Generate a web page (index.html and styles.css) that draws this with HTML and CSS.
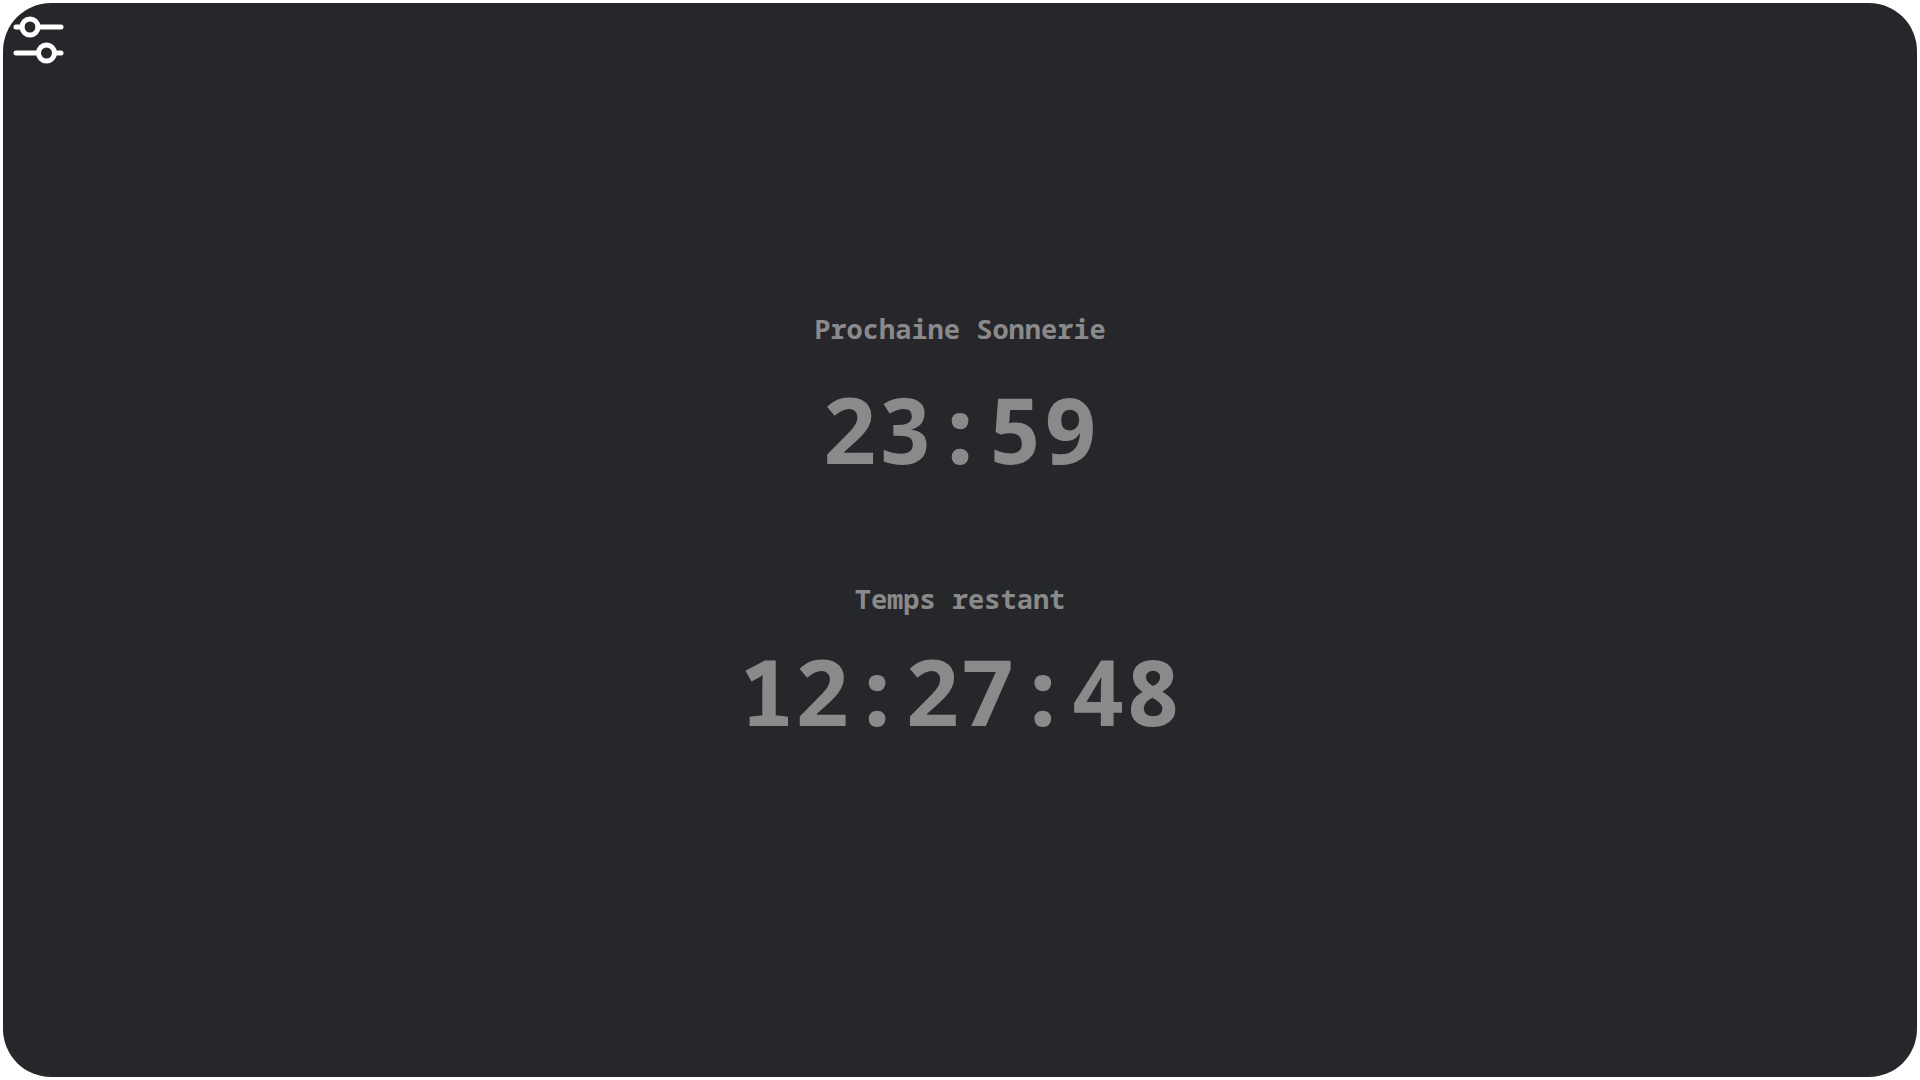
FILE: index.html
```html
<!DOCTYPE html>
<html lang="fr">
<head>
<meta charset="utf-8">
<title>Prochaine Sonnerie</title>
<link rel="stylesheet" href="styles.css">
</head>
<body>
<div class="app">
  <button class="settings" type="button" aria-label="Réglages">
    <svg class="settings-icon" viewBox="0 0 52 52" aria-hidden="true">
      <path d="M4 13H10M26 13H49M4 39H26M43 39H49"/>
      <circle cx="18" cy="13" r="8"/>
      <circle cx="34.5" cy="39" r="8"/>
    </svg>
  </button>
  <main class="clock">
    <section class="block next">
      <h2 class="label">Prochaine Sonnerie</h2>
      <p class="time">23:59</p>
    </section>
    <section class="block remaining">
      <h2 class="label">Temps restant</h2>
      <p class="time">12:27:48</p>
    </section>
  </main>
</div>
</body>
</html>
```
FILE: styles.css
```css
* {
  box-sizing: border-box;
}

body {
  margin: 0;
  padding: 3px;
  min-height: 100vh;
  display: flex;
  background: #fff;
  font-family: Consolas, "Noto Sans Mono", "DejaVu Sans Mono", monospace;
}

.app {
  position: relative;
  flex: 1;
  display: flex;
  align-items: center;
  justify-content: center;
  border-radius: 48px;
  background: #26272b;
  color: #8a8a8a;
}

.settings {
  position: absolute;
  top: 11px;
  left: 9px;
  padding: 0;
  border: 0;
  background: none;
  cursor: pointer;
}

.settings-icon {
  display: block;
  width: 52px;
  height: 52px;
  fill: none;
  stroke: #fff;
  stroke-width: 5;
  stroke-linecap: round;
}

.clock {
  display: flex;
  flex-direction: column;
  gap: 88px;
  padding-bottom: 18px;
  text-align: center;
}

.block {
  display: flex;
  flex-direction: column;
}

.next {
  gap: 18px;
}

.remaining {
  gap: 10px;
}

.label {
  margin: 0;
  font-size: 27px;
  line-height: 40px;
}

.time {
  margin: 0;
  font-size: 92px;
  line-height: 124px;
  font-weight: 700;
}
```
